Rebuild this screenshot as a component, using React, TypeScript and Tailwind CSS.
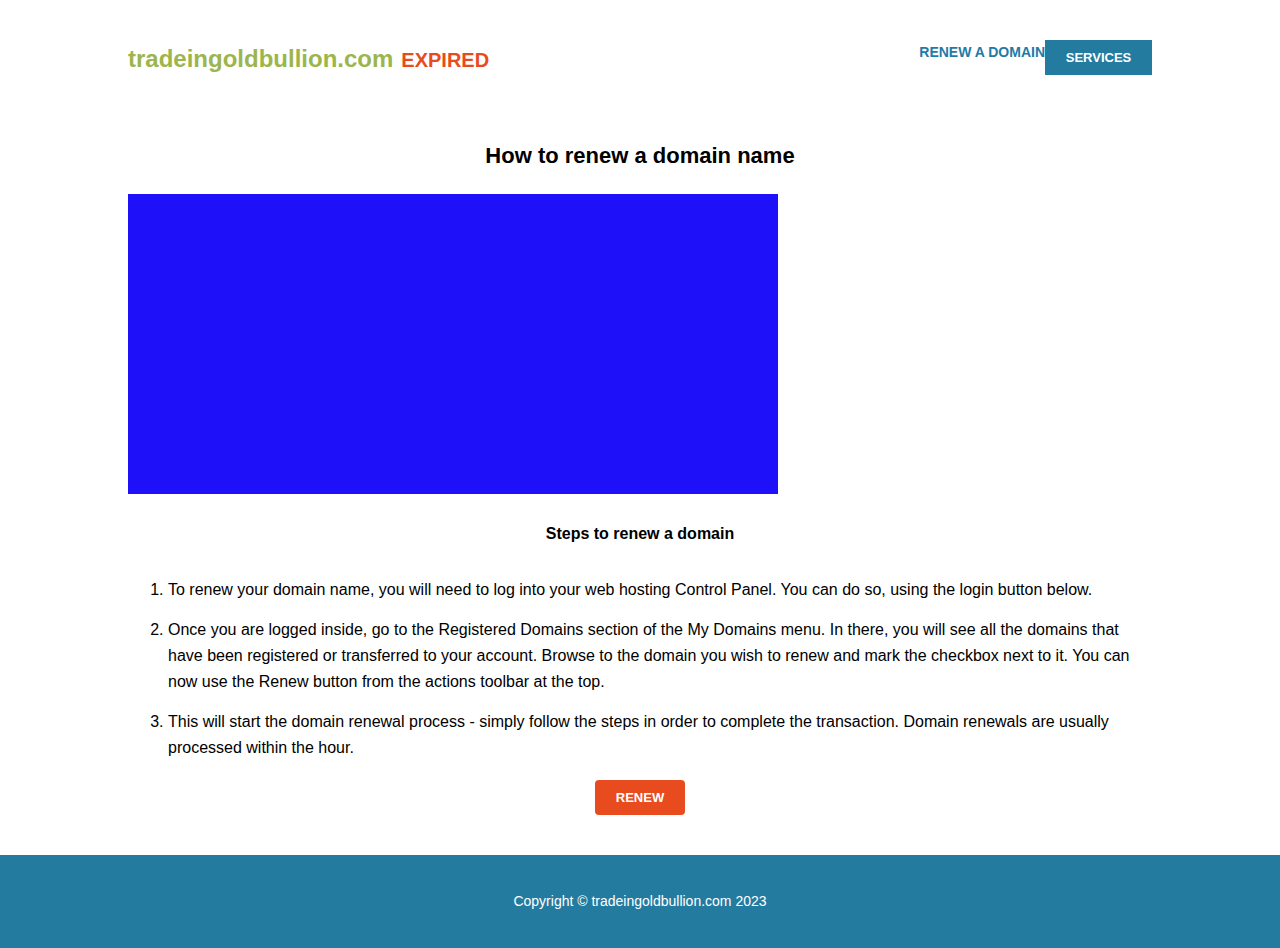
export default function App() {
  const steps = [
    "To renew your domain name, you will need to log into your web hosting Control Panel. You can do so, using the login button below.",
    "Once you are logged inside, go to the Registered Domains section of the My Domains menu. In there, you will see all the domains that have been registered or transferred to your account. Browse to the domain you wish to renew and mark the checkbox next to it. You can now use the Renew button from the actions toolbar at the top.",
    "This will start the domain renewal process - simply follow the steps in order to complete the transaction. Domain renewals are usually processed within the hour.",
  ];

  return (
    <div className="min-h-[948px] flex flex-col bg-white text-black font-['Liberation_Sans',Arial,sans-serif]">
      <div className="w-[1024px] mx-auto flex-1">
        {/* Header */}
        <header className="flex justify-between items-start pt-10 h-[112px]">
          <div className="pt-[3px] flex items-baseline">
            <span className="text-[24px] font-bold text-[#9cb54c] leading-[32px]">tradeingoldbullion.com</span>
            <span className="ml-2 text-[20px] font-bold text-[#e84c1e]">EXPIRED</span>
          </div>
          <nav className="flex items-start">
            <a className="text-[14px] font-bold text-[#1d7ba6] pt-[3px] leading-[18px]">RENEW A DOMAIN</a>
            <a className="w-[107px] h-[35px] bg-[#247ba0] text-white text-[13px] font-bold flex items-center justify-center">SERVICES</a>
          </nav>
        </header>

        {/* Main */}
        <main>
          <h1 className="text-center text-[22px] font-bold leading-[30px] mt-[29px]">How to renew a domain name</h1>
          <div className="w-[650px] h-[300px] bg-[#1e10f8] mt-[23px]" />
          <h2 className="text-center text-[16px] font-bold mt-[30px] leading-[20px]">Steps to renew a domain</h2>
          <ol className="list-decimal pl-10 mt-[33px] text-[16px] leading-[26px]">
            {steps.map((s, i) => (
              <li key={i} className="mb-[14px]">{s}</li>
            ))}
          </ol>
          <div className="flex justify-center mt-[19px]">
            <button className="w-[90px] h-[35px] rounded-[4px] bg-[#e84c1e] text-white text-[13px] font-bold">RENEW</button>
          </div>
        </main>
      </div>

      {/* Footer */}
      <footer className="h-[93px] bg-[#247ba0] text-white text-[14px] flex items-center justify-center">
        Copyright © tradeingoldbullion.com 2023
      </footer>
    </div>
  );
}
